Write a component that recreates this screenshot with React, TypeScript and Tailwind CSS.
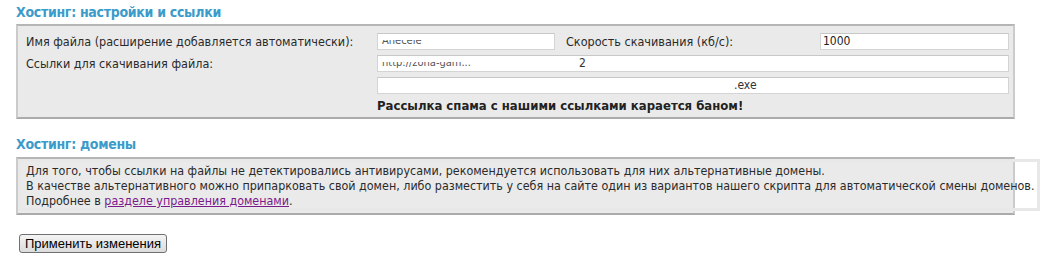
import React from 'react';

const font = "font-['DejaVu_Sans_Condensed','DejaVu_Sans',sans-serif]";

const Field = ({ children }: { children?: React.ReactNode }) => (
  <div className="h-[17px] bg-white border border-[#d4d4d4] border-t-[#c8c8c8] text-[12px] leading-[15px] pl-[2px] text-[#222] overflow-hidden whitespace-nowrap flex items-center">
    {children}
  </div>
);

// redacted fragment: only the bottom slice of the text stays visible
const Scrap = ({ text, className = '' }: { text: string; className?: string }) => (
  <span className={`inline-block h-[6px] overflow-hidden self-end mb-[3px] ${className}`}>
    <span className="block text-[11px] leading-[11px] -mt-[5px] text-[#555]">{text}</span>
  </span>
);

const Title = ({ children, className = '' }: { children: React.ReactNode; className?: string }) => (
  <h2 className={`pl-4 text-[14px] leading-[18px] font-bold tracking-[-0.3px] text-[#3b9bca] ${className}`}>{children}</h2>
);

export default function App() {
  return (
    <div className={`w-[1060px] h-[258px] bg-white text-[#2a2a2a] ${font} overflow-hidden`}>
      <Title className="pt-[3px] mb-[3px]">Хостинг: настройки и ссылки</Title>

      <div className="ml-4 w-[999px] bg-[#eaeaea] border-2 border-[#cbcbcb] border-t-[#b5b5b5] border-b-[#ababab] pl-2 pr-1 pt-[7px] pb-[3px]">
        <div className="grid grid-cols-[351px_178px_265px_189px] gap-y-[5px] text-[12.5px] leading-[17px]">
          <div>Имя файла (расширение добавляется автоматически):</div>
          <Field>
            <Scrap text="Anecele" className="ml-[2px]" />
          </Field>
          <div className="pl-[11px]">Скорость скачивания (кб/с):</div>
          <Field>1000</Field>

          <div>Ссылки для скачивания файла:</div>
          <div className="col-span-3">
            <Field>
              <Scrap text="http://zona-gam..." className="ml-[2px]" />
              <span className="ml-[108px] text-[#333]">2</span>
            </Field>
          </div>

          <div />
          <div className="col-span-3">
            <Field>
              <span className="ml-[354px] text-[#333]">.exe</span>
            </Field>
          </div>

          <div />
          <div className="col-span-3 text-[13px] font-bold text-[#222] -mt-[2px]">
            Рассылка спама с нашими ссылками карается баном!
          </div>
        </div>
      </div>

      <Title className="mt-4 mb-1">Хостинг: домены</Title>

      <div className="ml-4 w-[999px] bg-[#eaeaea] border-2 border-[#cbcbcb] border-t-[#b5b5b5] border-b-[#ababab] pb-[2px]">
        <div className="w-[1022px] border-[3px] border-[#e8e8e8] pl-[5px] pt-px text-[12.4px] leading-[15px] whitespace-nowrap">
          <p>Для того, чтобы ссылки на файлы не детектировались антивирусами, рекомендуется использовать для них альтернативные домены.</p>
          <p>В качестве альтернативного можно припарковать свой домен, либо разместить у себя на сайте один из вариантов нашего скрипта для автоматической смены доменов.</p>
          <p>
            Подробнее в{' '}
            <a href="#" className="text-[#7a1a8a] underline">разделе управления доменами</a>.
          </p>
        </div>
      </div>

      <div className="pl-[19px] pt-[16px]">
        <button className="h-[19px] px-[5px] border border-[#707070] rounded-[3px] bg-gradient-to-b from-[#f4f4f4] to-[#dcdcdc] font-['Liberation_Sans',Arial,sans-serif] text-[13px] leading-[17px] text-black">
          Применить изменения
        </button>
      </div>
    </div>
  );
}
